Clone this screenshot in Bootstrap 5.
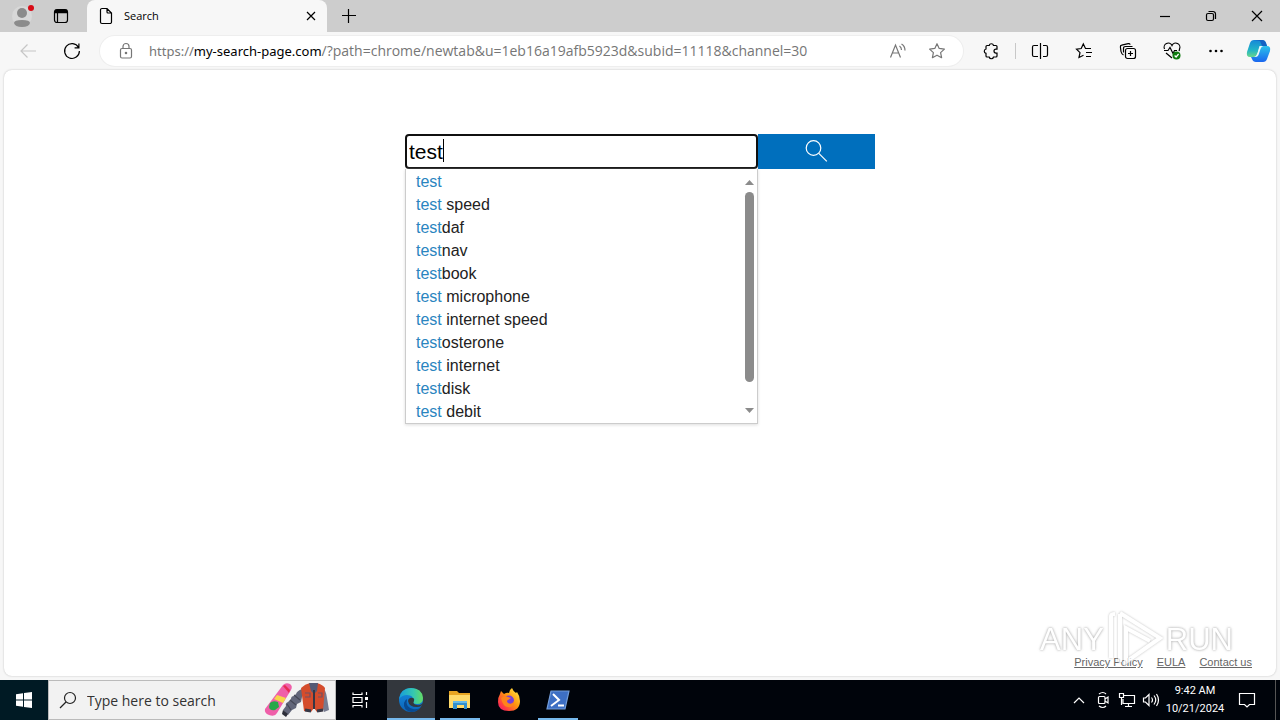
<!DOCTYPE html>
<html lang="en">
<head>
<meta charset="utf-8">
<meta name="viewport" content="width=device-width, initial-scale=1">
<title>Search</title>
<link href="https://cdn.jsdelivr.net/npm/bootstrap@5.3.0/dist/css/bootstrap.min.css" rel="stylesheet">
<style>
  body { font-family: "Open Sans", "Noto Sans", sans-serif; font-size: 12px; background: #f7f7f7; color: #000; }
  button, .btn { font-family: inherit; }
  svg { display: block; fill: none; stroke: currentColor; stroke-width: 1.2; flex: none; }
  .plain { border: 0; background: none; padding: 0; color: inherit; display: flex; align-items: center; justify-content: center; flex: none; }
  .titlebar { height: 32px; background: #cdcdcd; }
  .w-tool { width: 44px; height: 32px; }
  .w-end { width: 42px; height: 32px; }
  .w-win { width: 46px; height: 32px; }
  .w-side { width: 38px; height: 32px; }
  .tab-open { width: 240px; background: #f7f7f7; border-radius: 8px 8px 0 0; padding: 0 8px 0 12px; gap: 11px; margin-left: 7px; font-size: 11px; }
  .toolbar { height: 38px; padding-left: 6px; }
  .address { height: 30px; background: #fff; border-radius: 15px; box-shadow: 0 0 0 1px #eee; margin: 0 6px; padding: 0 6px 0 18px; color: #767676; }
  .url { font-family: "Noto Sans", sans-serif; font-size: 13px; margin-left: 14px; outline: 0; }
  .url b { font-weight: 400; color: #000; }
  .url-path { font-family: "Open Sans", sans-serif; font-size: 14px; }
  .w-addr { width: 40px; height: 30px; }
  .rule { width: 1px; height: 16px; background: #c8c8c8; margin: 0 2px; flex: none; }
  .page { background: #fff; margin: 0 4px 4px; border-radius: 8px; box-shadow: 0 0 2px #bbb; font-family: "Liberation Sans", Arial, sans-serif; padding-top: 64px; }
  .finder { width: 470px; }
  .field { flex: 3 1 0; }
  .query { height: 35px; border: 2px solid #101010; border-radius: 4px; padding: 0 2px; font-size: 21px; width: 100%; outline: 0; display: block; color: #000; }
  .caret { left: 38px; top: 5px; width: 1px; height: 23px; background: #000; }
  .go { flex: 1 1 0; height: 35px; background: #006fbd; color: #fff; border-radius: 0; }
  .go:hover { background: #0060a8; color: #fff; }
  .suggest { border: 1px solid #ccc; border-top: 0; box-shadow: 0 1px 3px #ddd; background: #fff; font-size: 16px; line-height: 23px; padding-top: 1px; color: #222; }
  .suggest li { padding-left: 10px; cursor: pointer; }
  .suggest span { color: #2a85bf; }
  .scroller { right: 0; top: 1px; bottom: 0; width: 15px; padding: 10px 0; }
  .thumb { width: 9px; height: 190px; border-radius: 5px; background: #8b8b8b; margin-top: 7px; }
  .foot { padding: 0 24px 7px; font-size: 11px; line-height: 14px; gap: 14px; }
  .foot a { color: #666; }
  .watermark { right: 43px; bottom: 4px; font-size: 31px; line-height: 30px; color: #fff; text-shadow: 0 0 3px #999, 0 0 2px #bbb; pointer-events: none; opacity: .75; }
  .watermark svg { filter: drop-shadow(0 0 1px #aaa); margin: 0 2px; }
  .taskbar { height: 40px; background: #00040b; color: #fff; }
  .w-task { width: 48px; height: 40px; }
  .start { background: #001a24; }
  .find { width: 288px; background: #f2f2f2; border: 1px solid #bbb; color: #222; padding: 0 5px 0 10px; }
  .find input { border: 0; background: none; outline: 0; font-family: "Open Sans", sans-serif; font-size: 14px; padding: 0; margin-left: 10px; min-width: 0; }
  .find input::placeholder { color: #333; opacity: 1; }
  .apps { gap: 1px; margin-left: 3px; }
  .running { box-shadow: inset 0 -2px #76b9ed; }
  .running.short { width: 40px; margin: 0 4px; }
  .current { background: #33373d; }
  .w-tray { width: 24px; height: 40px; }
  .clock { width: 64px; font-size: 11px; line-height: 18px; font-family: Roboto, sans-serif; }
  .desk { width: 1px; height: 40px; background: #555; margin: 0 4px 0 8px; }
</style>
</head>
<body class="d-flex flex-column vh-100 overflow-hidden">

<header class="titlebar d-flex align-items-center">
  <button class="plain ms-1 w-side" aria-label="Profile">
    <svg width="24" height="28" viewBox="0 0 24 28"><circle cx="11" cy="14" r="10" fill="#d8d8d8" stroke="none"/><circle cx="11" cy="11" r="5" fill="#8b8b8b" stroke="none"/><path d="M3 21q0-3 8-3t8 3q-1 4-8 4t-8-4z" fill="#8b8b8b" stroke="none"/><circle cx="20" cy="6" r="3" fill="#d80b16" stroke="none"/></svg>
  </button>
  <button class="plain w-side" aria-label="Tab actions">
    <svg width="16" height="16" viewBox="0 0 16 16"><rect x="1.5" y="1.5" width="13" height="13" rx="2.5"/><path d="M2 3.5h12" stroke-width="3.500"/><path d="M4.500 5v9"/></svg>
  </button>
  <div class="tab-open d-flex align-items-center align-self-stretch">
    <svg width="14" height="18" viewBox="0 0 14 18"><path d="M3 1.500h5l4.500 4.500v9a1.500 1.500 0 0 1-1.500 1.500H3A1.500 1.500 0 0 1 1.500 15V3A1.500 1.500 0 0 1 3 1.500zM8 1.500V5a1 1 0 0 0 1 1h3.500"/></svg>
    <span class="flex-grow-1">Search</span>
    <button class="plain" aria-label="Close tab"><svg width="16" height="16" viewBox="0 0 16 16"><path d="M4 4l8 8M12 4l-8 8"/></svg></button>
  </div>
  <button class="plain w-tool" aria-label="New tab"><svg width="16" height="16" viewBox="0 0 16 16"><path d="M1 7.500h14M7.500 1v14"/></svg></button>
  <div class="ms-auto d-flex">
    <button class="plain w-win" aria-label="Minimize"><svg width="12" height="12" viewBox="0 0 12 12"><path d="M1 6.500h10"/></svg></button>
    <button class="plain w-win" aria-label="Restore"><svg width="12" height="12" viewBox="0 0 12 12"><rect x="1.500" y="3.500" width="7" height="7" rx="1.500"/><path d="M3.500 1.500H8A2.500 2.500 0 0 1 10.500 4v5"/></svg></button>
    <button class="plain w-win" aria-label="Close"><svg width="12" height="12" viewBox="0 0 12 12"><path d="M1 1l10 10M11 1L1 11"/></svg></button>
  </div>
</header>

<nav class="toolbar d-flex align-items-center">
  <button class="plain w-tool" aria-label="Back" disabled><svg width="18" height="16" viewBox="0 0 18 16"><path d="M17 8H2M8.500 1.500L2 8l6.500 6.500" stroke="#c6c6c6"/></svg></button>
  <button class="plain w-tool" aria-label="Refresh"><svg width="18" height="18" viewBox="0 0 18 18"><path d="M15.500 5.500A7.400 7.400 0 1 0 16.400 9M15.900 1.500v4.300h-4.300"/></svg></button>
  <div class="address d-flex align-items-center flex-grow-1">
    <svg width="17" height="18" viewBox="0 0 17 18"><rect x="2.500" y="6.500" width="11" height="9.500" rx="1.500"/><path d="M5 6.500V4.500a3 3 0 0 1 6 0v2"/><circle cx="8" cy="11" r=".7" fill="currentColor"/></svg>
    <div class="url flex-grow-1 text-nowrap" role="textbox" aria-label="Address" contenteditable="true">https://<b>my-search-page.com</b><span class="url-path">/?path=chrome/newtab&amp;u=1eb16a19afb5923d&amp;subid=11118&amp;channel=30</span></div>
    <button class="plain w-addr" aria-label="Read aloud"><svg width="18" height="16" viewBox="0 0 18 16"><path d="M2.500 14.500L7.500 2l5 12.500M4.200 10h6.600M11.500 3q2 1.500 2 4M13.500 1q3.500 2 3.500 6.500"/></svg></button>
    <button class="plain w-addr" aria-label="Add to favorites"><svg width="18" height="18" viewBox="0 0 18 18"><path d="M9 1.700l2.200 4.700 5.200.7-3.800 3.500 1 5.100L9 13.200l-4.600 2.500 1-5.100L1.600 7.100l5.200-.7z" stroke-linejoin="round"/></svg></button>
  </div>
  <button class="plain w-tool" aria-label="Extensions"><svg width="18" height="18" viewBox="0 0 18 18"><path d="M5 3.500h2.200a2.200 2.200 0 0 1 4.300 0H14q1 0 1 1v2.600h-1a2 2 0 0 0 0 4h1V14q0 1-1 1h-2.500a2.200 2.200 0 0 1-4.300 0H5q-1 0-1-1v-2.700a2.200 2.200 0 0 1 0-4.300V4.500q0-1 1-1z"/></svg></button>
  <span class="rule"></span>
  <button class="plain w-tool" aria-label="Split screen"><svg width="18" height="18" viewBox="0 0 18 18"><path d="M9.500 1v16M7 3.500H3A1.500 1.500 0 0 0 1.500 5v8A1.500 1.500 0 0 0 3 14.500h4M12 3.500h3A1.500 1.500 0 0 1 16.500 5v8a1.500 1.500 0 0 1-1.500 1.500h-3"/></svg></button>
  <button class="plain w-tool" aria-label="Favorites"><svg width="18" height="18" viewBox="0 0 18 18"><path d="M16 6.500h-5.500L8.300 2 6.200 6.500 1.500 7.200 5 10.700l-1 4.800 4.500-2.300M11 10.500h6M11 14.500h5"/></svg></button>
  <button class="plain w-tool" aria-label="Collections"><svg width="18" height="18" viewBox="0 0 18 18"><rect x="6.500" y="6.500" width="10" height="10" rx="2"/><path d="M11.500 9v5M9 11.500h5M4.500 13Q2.500 12 2 9.500L1.400 5q-.2-1.500 1.300-1.800l6.500-1.600q1.500-.3 2 1M4.500 10.500V6.500q0-2 2-2h7"/></svg></button>
  <button class="plain w-tool" aria-label="Browser essentials"><svg width="18" height="18" viewBox="0 0 18 18"><path d="M1.500 7A4 4 0 0 1 9 3.500 4 4 0 0 1 16.500 7q0 1-.5 2M1 8.500h4l2-3 3 6 1.500-3H14M3 11l6 5"/><circle cx="13.500" cy="13.500" r="4" fill="#107c10" stroke="none"/><path d="M11.600 13.500l1.500 1.500 2.500-3" stroke="#fff"/></svg></button>
  <button class="plain w-tool" aria-label="Settings and more"><svg width="16" height="6" viewBox="0 0 16 6"><g fill="currentColor" stroke="none"><circle cx="2.500" cy="3" r="1.300"/><circle cx="8" cy="3" r="1.300"/><circle cx="13.500" cy="3" r="1.300"/></g></svg></button>
  <button class="plain w-end" aria-label="Copilot">
    <svg width="26" height="24" viewBox="0 0 26 24"><defs><linearGradient id="ca" x1="0" y1="0" x2="0" y2="1"><stop stop-color="#1687d9"/><stop offset=".6" stop-color="#22b5c6"/><stop offset="1" stop-color="#69d68b"/></linearGradient><linearGradient id="cb" x1="0" y1="0" x2="0" y2="1"><stop stop-color="#2bc3ea"/><stop offset="1" stop-color="#1a66ef"/></linearGradient></defs>
    <g stroke="none"><path d="M8 1h8q3 0 4 3l1 3h-5q-2 0-3 3l-2 6q-1 2-3 2H4q-4 0-3-5L4 4q1-3 4-3z" fill="url(#ca)"/><path d="M18 23h-8q-3 0-4-3l-1-2h4q2 0 3-3l2-6q1-2 3-2h4q4 0 3 5l-3 8q-1 3-4 3z" fill="url(#cb)"/><path d="M8 1h8q3 0 4 3l1 3h-5L14 2z" fill="#1463c4"/><path d="M13.500 7h4q-2 0-3 3l-2 6q-1 2-3 2h-1q2-1 3-4z" fill="#e9f8fc"/></g></svg>
  </button>
</nav>

<main class="page flex-grow-1 d-flex flex-column position-relative">
  <form class="finder d-flex align-items-start mx-auto mw-100" onsubmit="return false">
    <div class="field position-relative">
      <input class="query" type="text" value="test" aria-label="Search the web" autocomplete="off">
      <span class="caret position-absolute"></span>
      <div class="suggest position-relative">
        <ul class="list-unstyled m-0">
          <li><span>test</span></li>
          <li><span>test</span> speed</li>
          <li><span>test</span>daf</li>
          <li><span>test</span>nav</li>
          <li><span>test</span>book</li>
          <li><span>test</span> microphone</li>
          <li><span>test</span> internet speed</li>
          <li><span>test</span>osterone</li>
          <li><span>test</span> internet</li>
          <li><span>test</span>disk</li>
          <li><span>test</span> debit</li>
        </ul>
        <div class="scroller position-absolute d-flex flex-column align-items-center">
          <svg width="9" height="5" viewBox="0 0 9 5"><path d="M0 5L4.500 0 9 5z" fill="#8b8b8b" stroke="none"/></svg>
          <div class="thumb"></div>
          <svg class="mt-auto" width="9" height="5" viewBox="0 0 9 5"><path d="M0 0l4.500 5L9 0z" fill="#8b8b8b" stroke="none"/></svg>
        </div>
      </div>
    </div>
    <button class="btn go p-0 border-0 d-flex align-items-center justify-content-center" aria-label="Search"><svg width="24" height="24" viewBox="0 0 24 24"><circle cx="9.500" cy="8" r="7.300"/><path d="M14.800 13.300l8 8"/></svg></button>
  </form>
  <footer class="foot mt-auto d-flex justify-content-end">
    <a href="#">Privacy Policy</a><a href="#">EULA</a><a href="#">Contact us</a>
  </footer>
  <div class="watermark position-absolute d-flex align-items-center">
    <span>ANY</span>
    <svg width="58" height="64" viewBox="0 0 58 64"><path d="M5 50V8q0-2 4-2M14 6v48M14 5L54 30 20 54V20l24 13" stroke="#fff" stroke-width="4"/></svg>
    <span>RUN</span>
  </div>
</main>

<footer class="taskbar d-flex align-items-center">
  <button class="plain w-task start" aria-label="Start"><svg width="16" height="16" viewBox="0 0 16 16"><path d="M0 2.200L7 1.200V7.500H0zM8 1L16 0v7.500H8zM0 8.500h7v6.300l-7-1zM8 8.500h8V16l-8-1z" fill="#fff" stroke="none"/></svg></button>
  <div class="find d-flex align-items-center align-self-stretch">
    <svg width="18" height="18" viewBox="0 0 18 18"><circle cx="11" cy="7" r="5.500"/><path d="M7 11l-6 6"/></svg>
    <input class="flex-grow-1" type="search" placeholder="Type here to search" aria-label="Type here to search">
    <svg width="66" height="36" viewBox="0 0 66 36">
      <g stroke="none"><path d="M19 3q3-3 7-1 3 2 1 6L13 31q-2 4-8 2-5-2-4-6z" fill="#ef5fa9"/><path d="M19 4l6 7 1-3-5-5z" fill="#e72b53"/><path d="M13 13l9 3-3 5-9-4z" fill="#f7d64a"/><path d="M6 21q3-3 8-1l1 5-4 3q-5 1-6-3z" fill="#25a84a"/>
      <path d="M38 7q-5 2-6 5l-2 2q-3 0-3 3l-3 3q-3 1-2 4l-3 4 5 5 4-5 4-2 1-4 4-2 1-5z" fill="#62667a"/><path d="M19 28l-1 4 4 3 2-3z" fill="#2c2e39"/><path d="M30 13l6 5M26 18l6 5M23 22l4 6" stroke="#454857"/>
      <path d="M57 5q5 2 6 11l2 12-5 2-5-13z" fill="#777b90"/><path d="M37 6q4-4 9-5h7q6 2 8 5l-2 23-6 1-3-4-3 4-7-1z" fill="#d44c2c"/><path d="M45 1h9l-1 8-3 3-3-3z" fill="#555a75"/><path d="M50 8v19" stroke="#353746" stroke-width="2"/><path d="M41 11h5v4h-5M54 11h4v4h-4" stroke="#735061"/><path d="M41 28l6 1M53 29l6-1" stroke="#343746" stroke-width="3"/></g>
    </svg>
  </div>
  <button class="plain w-task" aria-label="Task view"><svg width="18" height="18" viewBox="0 0 18 18"><path d="M2 1.500v2h9v-2M2 16.500v-2h9v2M2 6.500h9v5H2zM15.500 1v3M15.500 11v6"/><rect x="14" y="6" width="3" height="3" fill="#fff" stroke="none"/></svg></button>
  <div class="apps d-flex">
    <button class="plain w-task running current" aria-label="Microsoft Edge"><svg width="26" height="26" viewBox="0 0 26 26"><defs><linearGradient id="ea"><stop stop-color="#169cdb"/><stop offset=".6" stop-color="#35c8b0"/><stop offset="1" stop-color="#65dc62"/></linearGradient><linearGradient id="eb" x1="0" x2="0" y1="0" y2="1"><stop stop-color="#168ee1"/><stop offset="1" stop-color="#0b63b7"/></linearGradient></defs><g stroke="none"><circle cx="13" cy="13" r="12" fill="url(#eb)"/><path d="M1 12Q3 1 13 1q11 0 12 10 0 6-6 6-5 0-4-3 1-6-6-6-5 0-8 4z" fill="url(#ea)"/><path d="M9 12q-2 8 6 10 5 1 8-2-4 5-10 5Q5 23 6 16q1-3 3-4z" fill="#084a91"/><path d="M12 11q5-1 4 3-2 3 3 4 3 1 6-2-1 4-6 4-8 0-9-6 0-2 2-3z" fill="#33373d"/></g></svg></button>
    <button class="plain w-task running short" aria-label="File Explorer"><svg width="22" height="20" viewBox="0 0 22 20"><g stroke="none"><path d="M0 1h8l2 2h11v15H0z" fill="#e8a522"/><path d="M0 5h21v13H0z" fill="#ffda6a"/><path d="M4 11h14v8h-3v-4H8v4H4z" fill="#318fce"/><path d="M4 11h14v2H4z" fill="#65b9e8"/></g></svg></button>
    <button class="plain w-task" aria-label="Firefox"><svg width="24" height="24" viewBox="0 0 24 24"><defs><linearGradient id="fa" x1="1" y1="0" x2="0" y2="1"><stop stop-color="#fff44f"/><stop offset=".45" stop-color="#ff980e"/><stop offset=".8" stop-color="#ff3647"/><stop offset="1" stop-color="#e31587"/></linearGradient></defs><g stroke="none"><path d="M3 6l1-3 3 3q3-2 5-1 0-3 3-5 1 3 4 5l1-1q3 4 3 9 0 10-11 10T1 14q0-5 2-8z" fill="url(#fa)"/><circle cx="12" cy="12.500" r="5" fill="#7540d8"/><path d="M4 10q4-3 7-1l3 1-3 2q-2 1 0 3 4 2 6-2 0 7-6 6-5 0-7-9z" fill="#ff841b"/></g></svg></button>
    <button class="plain w-task running short" aria-label="PowerShell"><svg width="24" height="20" viewBox="0 0 24 20"><path d="M5 1h18l-4 18H1z" fill="#3d6fc4" stroke="#719cd9"/><path d="M7 4l6 6-8 6M12 15.500h6" stroke="#fff" stroke-width="2"/></svg></button>
  </div>
  <div class="ms-auto d-flex align-items-center">
    <button class="plain w-tray" aria-label="Show hidden icons"><svg width="14" height="10" viewBox="0 0 14 10"><path d="M2 8l5-5 5 5"/></svg></button>
    <button class="plain w-tray" aria-label="Meet now"><svg width="14" height="18" viewBox="0 0 14 18"><rect x="2.500" y="5.500" width="6.500" height="7" rx="1"/><path d="M9 8l3-2v6l-3-2M3 3q4-3 7 0M3 15q4 3 7 0"/></svg></button>
    <button class="plain w-tray" aria-label="Network"><svg width="18" height="16" viewBox="0 0 18 16"><path d="M6 3.500h10.500v8H5V7M7 14.500h7M10.500 12v2M1.500 1.500h4v4h-4zM3.500 6v7"/></svg></button>
    <button class="plain w-tray" aria-label="Volume"><svg width="18" height="16" viewBox="0 0 18 16"><path d="M1.500 6h2l3.500-3.500v11L3.500 10h-2zM9.500 5.500q2 2.500 0 5M12 3.500q3.500 4.500 0 9M14.500 2q4 6 0 12"/></svg></button>
    <div class="clock text-center text-nowrap">9:42 AM<br>10/21/2024</div>
    <button class="plain w-tray mx-2 px-1" aria-label="Notifications"><svg width="18" height="18" viewBox="0 0 18 18"><path d="M1.500 2.500h15v11h-5L9 16l-2.500-2.500h-5z"/></svg></button>
    <div class="desk"></div>
  </div>
</footer>
<script src="https://cdn.jsdelivr.net/npm/bootstrap@5.3.0/dist/js/bootstrap.bundle.min.js"></script>
</body>
</html>
